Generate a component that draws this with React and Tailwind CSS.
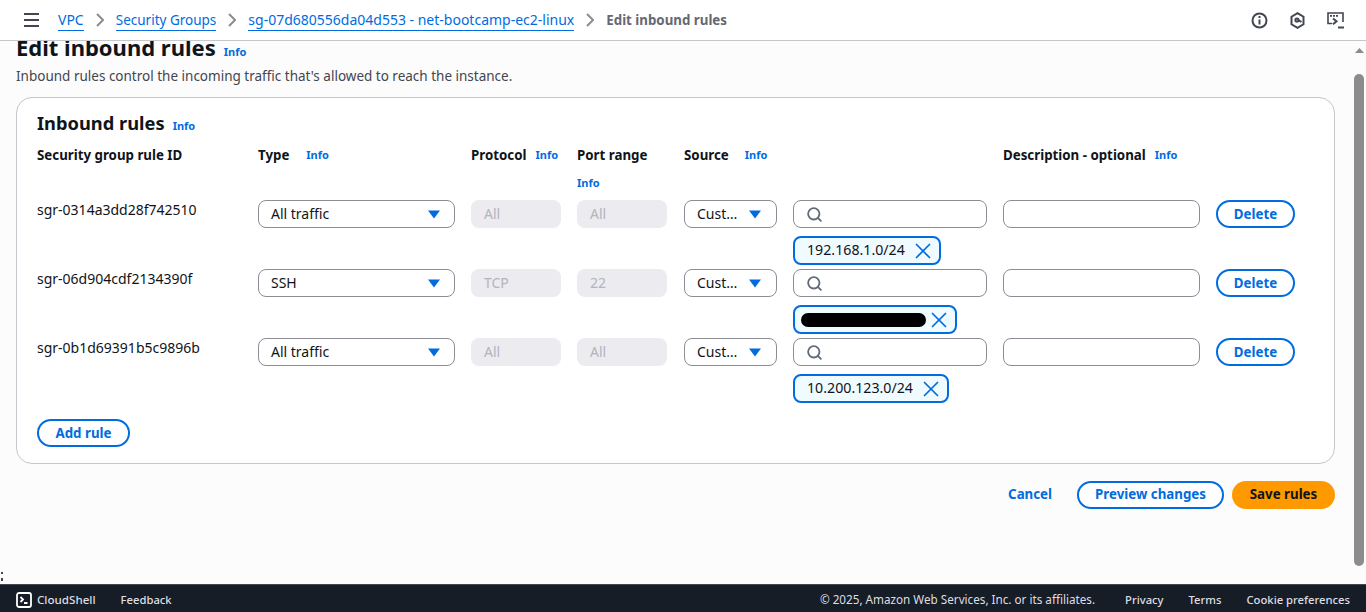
import { Search, X } from "lucide-react";

const FONT = "font-['Noto_Sans','Open_Sans',sans-serif]";
const COLS = "grid grid-cols-[205px_197px_90px_91px_93px_194px_197px_79px] gap-x-4";

const rules = [
  { id: "sgr-0314a3dd28f742510", type: "All traffic", protocol: "All", port: "All", cidr: "192.168.1.0/24", tokenWidth: "w-[148px]" },
  { id: "sgr-06d904cdf2134390f", type: "SSH", protocol: "TCP", port: "22", hidden: true, tokenWidth: "w-[164px]" },
  { id: "sgr-0b1d69391b5c9896b", type: "All traffic", protocol: "All", port: "All", cidr: "10.200.123.0/24", tokenWidth: "w-[156px]" },
];

function Info({ className = "" }) {
  return <span className={`text-[11px] leading-4 font-bold text-[#006ce0] ${className}`}>Info</span>;
}

function Crumb({ children, className = "text-[13.5px]" }) {
  return <span className={`text-[#006ce0] leading-5 border-b border-[#006ce0] ${className}`}>{children}</span>;
}

function Chevron() {
  return (
    <svg width="8" height="14" viewBox="0 0 8 14" fill="none" stroke="#8c8c94" strokeWidth="2" className="mx-3 shrink-0">
      <path d="M1 1l6 6-6 6" />
    </svg>
  );
}

function Caret() {
  return (
    <svg width="14" height="9" viewBox="0 0 14 9" className="shrink-0">
      <path d="M1 0.5h12L7 8.5z" fill="#006ce0" />
    </svg>
  );
}

function Select({ label, className = "" }) {
  return (
    <div className={`h-7 bg-white border border-[#8c8c94] rounded-lg flex items-center justify-between text-[14px] text-[#0f141a] ${className}`}>
      <span className="-mt-px">{label}</span>
      <Caret />
    </div>
  );
}

function Disabled({ value }) {
  return (
    <div className="h-7 w-[90px] bg-[#ebebf0] rounded-lg pl-[13px] pb-0.5 flex items-center text-[14px] text-[#b4b4bb]">{value}</div>
  );
}

function OutlineButton({ children, className = "" }) {
  return (
    <button className={`h-7 rounded-full border-2 border-[#006ce0] bg-white text-[#006ce0] font-bold text-[13.3px] flex items-center justify-center ${className}`}>
      {children}
    </button>
  );
}

function Rule({ rule }) {
  return (
    <div className={`${COLS} h-[69px]`}>
      <div className="text-[14px] leading-5 text-[#0f141a]">{rule.id}</div>
      <Select label={rule.type} className="pl-3 pr-[13px]" />
      <Disabled value={rule.protocol} />
      <Disabled value={rule.port} />
      <Select label="Cust…" className="pl-3 pr-[14px]" />
      <div>
        <div className="h-7 bg-white border border-[#8c8c94] rounded-lg pl-3 flex items-center">
          <Search size={17} strokeWidth={2.6} className="text-[#5f6b7a]" />
        </div>
        <div className={`mt-2 h-[29px] ${rule.tokenWidth} bg-[#f0fbff] border-2 border-[#006ce0] rounded-lg flex items-center justify-between pr-[3px] ${rule.hidden ? "pl-[6px]" : "pl-3"}`}>
          {rule.hidden ? (
            <div className="h-[14px] w-[125px] bg-black rounded-full" />
          ) : (
            <span className="text-[14.2px] -mt-px text-[#0f141a]">{rule.cidr}</span>
          )}
          <X size={26} strokeWidth={1.6} className="text-[#006ce0] shrink-0" />
        </div>
      </div>
      <div className="h-7 bg-white border border-[#8c8c94] rounded-lg" />
      <OutlineButton className="pt-px">Delete</OutlineButton>
    </div>
  );
}

export default function App() {
  return (
    <div className={`${FONT} h-[612px] w-[1366px] flex flex-col overflow-hidden bg-white`}>
      <header className="h-[41px] shrink-0 border-b border-[#c6c6cd] bg-white flex items-center pl-6 pr-[22px]">
        <svg width="15" height="14" viewBox="0 0 15 14" className="mr-[19px] shrink-0" fill="#424650">
          <rect y="0" width="15" height="2" />
          <rect y="6" width="15" height="2" />
          <rect y="12" width="15" height="2" />
        </svg>
        <Crumb className="text-[14px]">VPC</Crumb>
        <Chevron />
        <Crumb>Security Groups</Crumb>
        <Chevron />
        <Crumb className="text-[14px]">sg-07d680556da04d553 - net-bootcamp-ec2-linux</Crumb>
        <Chevron />
        <span className="text-[13.3px] font-bold text-[#656871] mt-px">Edit inbound rules</span>
        <div className="ml-auto flex items-center gap-[21px] text-[#424650]">
          <svg width="17" height="17" viewBox="0 0 17 17" fill="none" stroke="currentColor" strokeWidth="2">
            <circle cx="8.5" cy="8.5" r="7" />
            <path d="M8.5 7.5v5" />
            <path d="M8.5 4v2" />
          </svg>
          <svg width="17" height="17" viewBox="0 0 17 17" fill="none" stroke="currentColor" strokeWidth="2">
            <path d="M8.5 1.2l6 3.5v7.6l-6 3.5-6-3.5V4.7z" />
            <circle cx="8" cy="8" r="1.6" />
            <path d="M9 8.2l3.5 1.6" />
          </svg>
          <svg width="17" height="17" viewBox="0 0 17 17" fill="none" stroke="currentColor" strokeWidth="1.6">
            <path d="M5 11.5H1V1h15v9" />
            <path d="M3 3.8h2M6 3.8h2M9 3.8h2" strokeWidth="1.8" />
            <path d="M6 6.5l3.5 2.8L6 12.2" strokeWidth="2" />
            <path d="M11 15.5h6" strokeWidth="2" />
          </svg>
        </div>
      </header>

      <div className="flex-1 min-h-0 flex">
        <main className="relative w-[1352px] bg-[#fcfcfc] pl-4 pr-[17px] overflow-hidden">
          <div className="flex items-baseline gap-2 h-[28px] -mt-[8px]">
            <h1 className="text-[22px] leading-7 font-bold text-[#0f141a]">Edit inbound rules</h1>
            <Info />
          </div>
          <p className="text-[13.5px] leading-5 text-[#424650] mt-[5px]">Inbound rules control the incoming traffic that's allowed to reach the instance.</p>

          <section className="mt-[11px] h-[367px] bg-white border border-[#c6c6cd] rounded-2xl pt-[13px] pl-5">
            <div className="flex items-baseline gap-2 h-[26px]">
              <h2 className="text-[18.3px] leading-6 font-bold text-[#0f141a]">Inbound rules</h2>
              <Info />
            </div>
            <div className={`${COLS} h-[55px] mt-2 text-[13.3px] leading-5 font-bold text-[#0f141a]`}>
              <div>Security group rule ID</div>
              <div className="flex gap-[17px] items-start"><span>Type</span><Info className="mt-[2px]" /></div>
              <div className="flex gap-[9px] items-start"><span>Protocol</span><Info className="mt-[2px]" /></div>
              <div className="flex flex-col gap-[10px] items-start"><span>Port range</span><Info /></div>
              <div className="flex gap-4 items-start"><span>Source</span><Info className="mt-[2px]" /></div>
              <div />
              <div className="flex gap-[9px] items-start col-span-2"><span>Description - optional</span><Info className="mt-[2px]" /></div>
            </div>
            {rules.map((rule) => (
              <Rule key={rule.id} rule={rule} />
            ))}
            <OutlineButton className="w-[93px] mt-3 pt-px">Add rule</OutlineButton>
          </section>

          <div className="mt-[17px] flex items-center justify-end">
            <span className="text-[13.3px] font-bold text-[#006ce0] mr-[25px]">Cancel</span>
            <OutlineButton className="w-[147px] mr-[8px]">Preview changes</OutlineButton>
            <button className="h-7 w-[103px] rounded-full bg-[#ff9900] text-[#0f141a] font-bold text-[13.3px]">Save rules</button>
          </div>
          <div className="absolute left-[1px] bottom-[3px] flex flex-col gap-[4px]">
            <div className="w-[2px] h-[2px] bg-[#424650]" />
            <div className="w-[2px] h-[3px] bg-[#424650]" />
          </div>
        </main>
        <div className="w-[14px] bg-[#fcfcfc] flex flex-col items-center pt-[7px]">
          <svg width="9" height="5" viewBox="0 0 9 5"><path d="M4.5 0L9 5H0z" fill="#8c8c8c" /></svg>
          <div className="w-[10px] h-[492px] mt-[21px] rounded-full bg-[#8c8c8c]" />
        </div>
      </div>

      <footer className="h-7 shrink-0 bg-[#161d26] border-t border-[#424650] flex items-center pl-4 pr-4 pt-[3px] text-[11.25px] text-[#dedee3]">
        <svg width="16" height="16" viewBox="0 0 16 16" fill="none" stroke="#ffffff" strokeWidth="1.8" className="mr-[5px]">
          <rect x="1" y="1" width="14" height="14" rx="2" />
          <path d="M4.5 5l2.5 2.5L4.5 10M8 11h3.5" />
        </svg>
        <span className="font-medium text-[11.6px]">CloudShell</span>
        <span className="ml-[25px] font-medium">Feedback</span>
        <span className="ml-auto text-[11.7px]">© 2025, Amazon Web Services, Inc. or its affiliates.</span>
        <span className="ml-[30px] font-medium">Privacy</span>
        <span className="ml-[25px] font-medium">Terms</span>
        <span className="ml-[25px] font-medium">Cookie preferences</span>
      </footer>
    </div>
  );
}
